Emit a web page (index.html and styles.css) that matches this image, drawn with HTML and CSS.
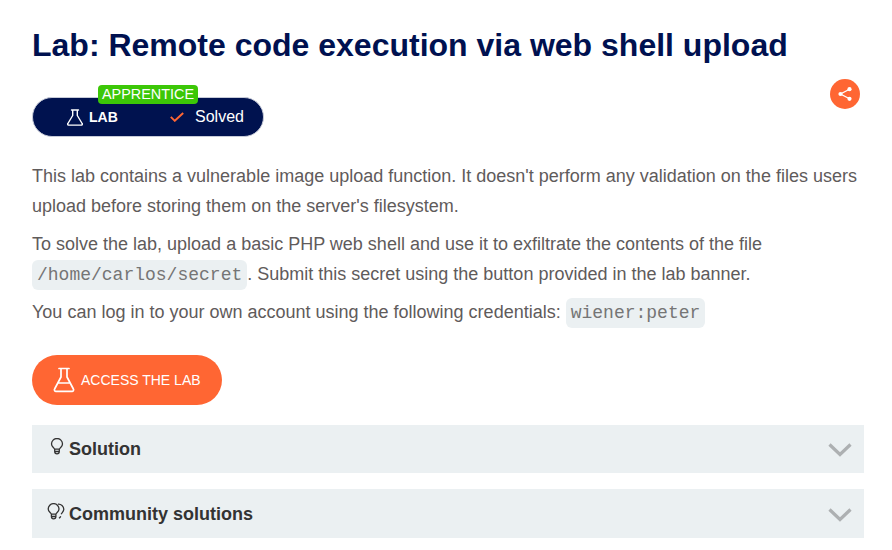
FILE: index.html
```html
<!DOCTYPE html>
<html lang="en">
<head>
<meta charset="utf-8">
<title>Lab: Remote code execution via web shell upload</title>
<link rel="stylesheet" href="styles.css">
</head>
<body>
<main class="page">
  <h1 class="title">Lab: Remote code execution via web shell upload</h1>
  <div class="status-row">
    <div class="widget">
      <span class="level">APPRENTICE</span>
      <span class="lab-tag">
        <svg class="flask-small" viewBox="0 0 16 17" width="16" height="17" fill="none" stroke="#fff" stroke-width="1.4" stroke-linejoin="round" stroke-linecap="round"><path d="M4.500 1h7M5.700 1v5.500L.9 14.500a1 1 0 0 0 .9 1.600h12.400a1 1 0 0 0 .9-1.600L10.300 6.500V1"/></svg>
        <span>LAB</span>
      </span>
      <span class="solved">
        <svg class="check" viewBox="0 0 14 10" width="14" height="10" fill="none" stroke="#ff6633" stroke-width="1.900"><path d="M.8 4.800l4 4L13.200 1"/></svg>
        <span>Solved</span>
      </span>
    </div>
    <a class="share" href="#" aria-label="Share">
      <svg viewBox="0 0 16 16" width="16" height="16" fill="none" stroke="#fff" stroke-width="1.3"><path d="M12.5 3.2L3.5 8l9 4.8"/><circle cx="12.5" cy="3.2" r="2.1" fill="#fff" stroke="none"/><circle cx="3.5" cy="8" r="2.1" fill="#fff" stroke="none"/><circle cx="12.5" cy="12.8" r="2.1" fill="#fff" stroke="none"/></svg>
    </a>
  </div>
  <p class="lead">This lab contains a vulnerable image upload function. It doesn't perform any validation on the files users upload before storing them on the server's filesystem.</p>
  <p class="para">To solve the lab, upload a basic PHP web shell and use it to exfiltrate the contents of the file <code>/home/carlos/secret</code>. Submit this secret using the button provided in the lab banner.</p>
  <p class="para">You can log in to your own account using the following credentials: <code>wiener:peter</code></p>
  <a class="access" href="#">
    <svg viewBox="0 0 22 26" width="22" height="26" fill="none" stroke="#fff" stroke-width="1.7" stroke-linejoin="round" stroke-linecap="round"><path d="M6 1.500h10M8 1.500V10L1.600 22a1.600 1.600 0 0 0 1.400 2.400h16a1.600 1.600 0 0 0 1.400-2.400L14 10V1.500M5 16h12"/></svg>
    <span>ACCESS THE LAB</span>
  </a>
  <section class="accordion first">
    <h4 class="acc-title">
      <svg class="bulb" viewBox="0 0 14 17" width="14" height="17" fill="none" stroke="#333" stroke-width="1.300"><path d="M4.600 11.200C4.200 9.600 1.500 8.700 1.500 6a5.500 5.500 0 0 1 11 0c0 2.700-2.700 3.600-3.100 5.200zM4.700 11.200v2.300c0 1.500 1 2.300 2.300 2.300s2.300-.8 2.300-2.300v-2.300M4.700 13.500h4.600"/></svg>
      <span>Solution</span>
    </h4>
    <svg class="chev" viewBox="0 0 24 14" width="24" height="14" fill="none" stroke="#adb0b2" stroke-width="3.200"><path d="M1.500 1.500L12 11.500 22.500 1.500"/></svg>
  </section>
  <section class="accordion second">
    <h4 class="acc-title">
      <svg class="bulbs" viewBox="0 0 18 17" width="18" height="17" fill="none" stroke="#333" stroke-width="1.300"><path d="M11 1.100a5.300 5.300 0 0 1 5.800 5.200c0 2.400-2 3.300-2.600 4.900M13.700 13.300c-.3.900-1 1.600-1.800 1.900M4.400 11.200C4 9.600 1.200 8.700 1.200 6a5.400 5.400 0 0 1 10.800 0c0 2.700-2.700 3.600-3.100 5.200zM4.400 11.200v2.300c0 1.500 1 2.300 2.200 2.300s2.300-.8 2.300-2.300v-2.300M4.400 13.500h4.500"/></svg>
      <span>Community solutions</span>
    </h4>
    <svg class="chev" viewBox="0 0 24 14" width="24" height="14" fill="none" stroke="#adb0b2" stroke-width="3.200"><path d="M1.500 1.500L12 11.500 22.500 1.500"/></svg>
  </section>
</main>
</body>
</html>
```
FILE: styles.css
```css
* { box-sizing: border-box; }
html, body { margin: 0; padding: 0; background: #fff; }
body { font-family: "Liberation Sans", Arial, sans-serif; color: #5f5b5b; overflow: hidden; }
.page { width: 892px; padding: 24px 28px 0 32px; }
.title { margin: 0; font-size: 32px; line-height: 42px; font-weight: 700; color: #001150; }
.status-row { display: flex; justify-content: space-between; align-items: flex-start; margin-top: 31px; height: 40px; }
.widget { position: relative; display: flex; align-items: center; width: 232px; height: 40px; border-radius: 20px; background: #00124f; border: 1px solid #c7cbd8; color: #fff; }
.level { position: absolute; top: -13px; left: 65px; width: 100px; height: 19px; border-radius: 4px; background: #3cc707; color: #fff; font-size: 14.400px; line-height: 19px; text-align: center; }
.lab-tag { display: flex; align-items: center; gap: 6px; margin-left: 34px; width: 103px; font-size: 14px; font-weight: 700; }
.solved { display: flex; align-items: center; gap: 11px; font-size: 16px; }
.share { display: flex; align-items: center; justify-content: center; width: 30px; height: 30px; border-radius: 50%; background: #ff6633; margin-top: -18px; margin-right: 4px; }
.lead, .para { margin: 0; font-size: 18px; }
.lead { margin-top: 24px; line-height: 30px; }
.para { line-height: 30px; margin-top: 8px; }
.para + .para { margin-top: 7px; }
code { font-family: "Liberation Mono", monospace; font-size: 18px; color: #757575; background: #ebf0f2; border-radius: 6px; padding: 5px; }
.access { display: inline-flex; align-items: center; gap: 6px; width: 190px; height: 50px; margin-top: 27px; padding-left: 21px; border-radius: 25px; background: #ff6633; color: #fff; font-size: 14px; text-decoration: none; vertical-align: top; }
.accordion { display: flex; align-items: center; justify-content: space-between; width: 832px; background: #ebf0f2; padding: 0 12px 0 16px; }
.accordion.first { height: 48px; margin-top: 20px; }
.accordion.second { height: 49px; margin-top: 16px; }
.acc-title { display: flex; align-items: center; gap: 4px; margin: 0; font-size: 18px; line-height: 24px; font-weight: 700; color: #333; }
.bulb { margin-left: 2px; margin-top: -5px; margin-right: 1px; }
.bulbs { margin-left: -1px; margin-top: -5px; }
.chev { margin-top: 2px; }
```
